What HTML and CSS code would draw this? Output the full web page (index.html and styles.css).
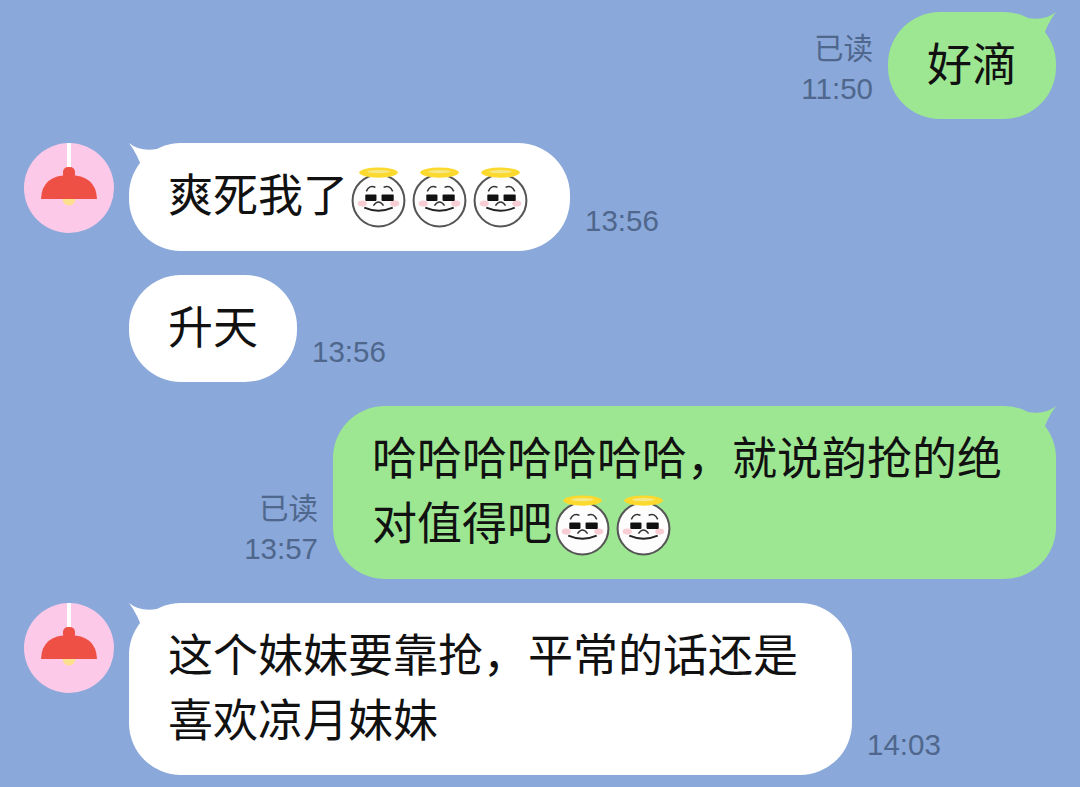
FILE: index.html
```html
<!DOCTYPE html>
<html>
<head>
    <meta charset="UTF-8" />
    <title>Chat</title>
    <meta name="viewport" content="width=device-width, initial-scale=1">
    <link rel="stylesheet" href="styles.css">
</head>
<body>

<svg class="defs" width="0" height="0">
  <symbol id="angel" viewBox="0 0 60 62">
    <circle cx="30" cy="35" r="25.5" fill="#fdfdfd" stroke="#555" stroke-width="2"/>
    <ellipse cx="30" cy="7.5" rx="19" ry="5" fill="#fbd92e"/>
    <ellipse cx="30" cy="6.5" rx="11" ry="1.6" fill="#f5e88a"/>
    <ellipse cx="14" cy="38" rx="4.5" ry="3" fill="#f8cdd4"/>
    <ellipse cx="46" cy="38" rx="4.5" ry="3" fill="#f8cdd4"/>
    <rect x="17" y="29" width="11" height="6.5" rx="1" fill="#111"/>
    <rect x="33" y="29" width="12" height="6.5" rx="1" fill="#111"/>
    <path d="M18 26 Q21 19 27 22 M35 22 Q41 19 44 26" fill="none" stroke="#333" stroke-width="1.5"/>
    <path d="M25 40 Q30 33 35 40" fill="none" stroke="#333" stroke-width="1.5"/>
    <path d="M16 42 Q30 48 44 42" fill="none" stroke="#222" stroke-width="1.8"/>
  </symbol>
  <symbol id="lamp" viewBox="0 0 90 90">
    <circle cx="45" cy="45" r="45" fill="#fdc9e8"/>
    <rect x="43" y="0" width="4" height="25" fill="#fff"/>
    <circle cx="45" cy="56" r="6.5" fill="#fde08e"/>
    <rect x="39" y="24" width="12" height="12" rx="5" fill="#ef5046"/>
    <path d="M17 56 Q18 32 45 32 Q72 32 73 56 Z" fill="#ef5046"/>
  </symbol>
  <symbol id="tail" viewBox="0 0 30 30">
    <path d="M0 0 Q11 9 28 6 L14 28 Q9 12 0 0 Z"/>
  </symbol>
</svg>

<main class="chat">

  <div class="row mine">
    <div class="meta"><span>已读</span><span>11:50</span></div>
    <div class="bubble green">
      <svg class="tail"><use href="#tail"/></svg>
      好滴
    </div>
  </div>

  <div class="row">
    <svg class="avatar"><use href="#lamp"/></svg>
    <div class="bubble white tall">
      <svg class="tail"><use href="#tail"/></svg>
      爽死我了<svg class="emoji"><use href="#angel"/></svg><svg class="emoji"><use href="#angel"/></svg><svg class="emoji"><use href="#angel"/></svg>
    </div>
    <div class="meta"><span>13:56</span></div>
  </div>

  <div class="row follow">
    <div class="bubble white">升天</div>
    <div class="meta"><span>13:56</span></div>
  </div>

  <div class="row mine">
    <div class="meta"><span>已读</span><span>13:57</span></div>
    <div class="bubble green tall">
      <svg class="tail"><use href="#tail"/></svg>
      哈哈哈哈哈哈哈，就说韵抢的绝对值得吧<svg class="emoji"><use href="#angel"/></svg><svg class="emoji"><use href="#angel"/></svg>
    </div>
  </div>

  <div class="row">
    <svg class="avatar"><use href="#lamp"/></svg>
    <div class="bubble white">
      <svg class="tail"><use href="#tail"/></svg>
      这个妹妹要靠抢，平常的话还是喜欢凉月妹妹
    </div>
    <div class="meta"><span>14:03</span></div>
  </div>

</main>

</body>
</html>
```

FILE: styles.css
```css
* {
  box-sizing: border-box;
}

html, body {
  height: 100%;
}

body {
  margin: 0;
  background-color: #8aa8d9;
  font-family: "Noto Sans CJK SC", "Liberation Sans", sans-serif;
  overflow: hidden;
}

.defs {
  position: absolute;
}

.chat {
  display: flex;
  flex-direction: column;
  gap: 24px;
  padding: 12px 24px;
}

/* One message: avatar, bubble and time */
.row {
  display: flex;
  align-items: flex-start;
  gap: 15px;
}

.mine {
  justify-content: flex-end;
}

.follow {
  padding-left: 105px;
}

.avatar {
  flex: none;
  width: 90px;
  height: 90px;
}

.bubble {
  position: relative;
  max-width: 723px;
  padding: 17px 39px 25px;
  border-radius: 52px;
  font-size: 45px;
  line-height: 65px;
  color: #111;
}

/* Bubbles with stickers in them come out a pixel taller */
.tall {
  padding-bottom: 26px;
}

.white {
  background: #fff;
  fill: #fff;
}

.green {
  background: #9de692;
  fill: #9de692;
}

/* Little point at the top corner of a bubble */
.tail {
  position: absolute;
  top: 0;
  left: 0;
  width: 30px;
  height: 30px;
}

.mine .tail {
  left: auto;
  right: 0;
  transform: scaleX(-1);
}

.emoji {
  width: 61px;
  height: 63px;
  margin: -14px 0;
  vertical-align: -2px;
}

.meta {
  flex: none;
  align-self: flex-end;
  display: flex;
  flex-direction: column;
  align-items: flex-end;
  padding-bottom: 10px;
  font-family: "Liberation Sans", "Noto Sans CJK SC", sans-serif;
  font-size: 29.5px;
  line-height: 40px;
  color: #4f678c;
}
```
